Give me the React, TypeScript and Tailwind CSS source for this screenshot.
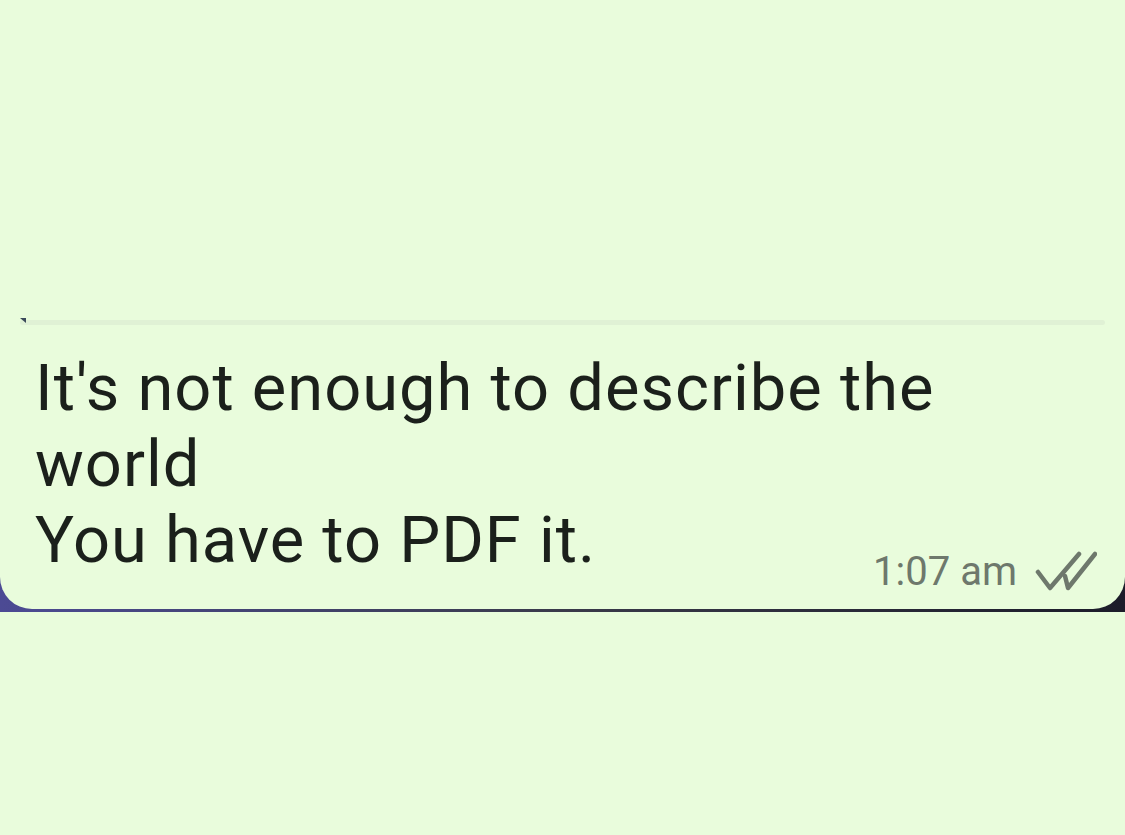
export default function App() {
  return (
    <div className="h-[835px] w-[1125px] overflow-hidden bg-[#e9fcdc] font-['Roboto',sans-serif]">
      <div className="h-[320px]" />
      <div className="relative h-[5px] mx-[20px] bg-[#e0f1d5] rounded-full">
        <div className="absolute left-0 top-[-2px] h-0 w-0 border-l-[6px] border-l-transparent border-t-[5px] border-t-[#3b4a5a]" />
      </div>
      <div className="h-[287px] bg-gradient-to-r from-[#4c4a94] via-[#3a3a4a] to-[#1c1c2a]">
        <div className="h-[284px] bg-[#e9fcdc] rounded-b-[32px] relative px-[35px] pt-[25px]">
          <p className="text-[#1b201b] text-[65px] leading-[76px] tracking-[1px]">
            It's not enough to describe the
            <br />
            world
            <br />
            You have to PDF it.
          </p>
          <div className="absolute right-[28px] bottom-[15px] flex items-center gap-[18px] text-[#6e786c]">
            <span className="text-[40px] leading-none">1:07 am</span>
            <svg width="62" height="44" viewBox="0 0 62 44" fill="none" stroke="#6e786c" strokeWidth="4.5" strokeLinecap="round" strokeLinejoin="round">
              <path d="M3 22 L15 38 L44 4" />
              <path d="M30 26 L33 38 L60 4" />
            </svg>
          </div>
        </div>
      </div>
    </div>
  );
}
